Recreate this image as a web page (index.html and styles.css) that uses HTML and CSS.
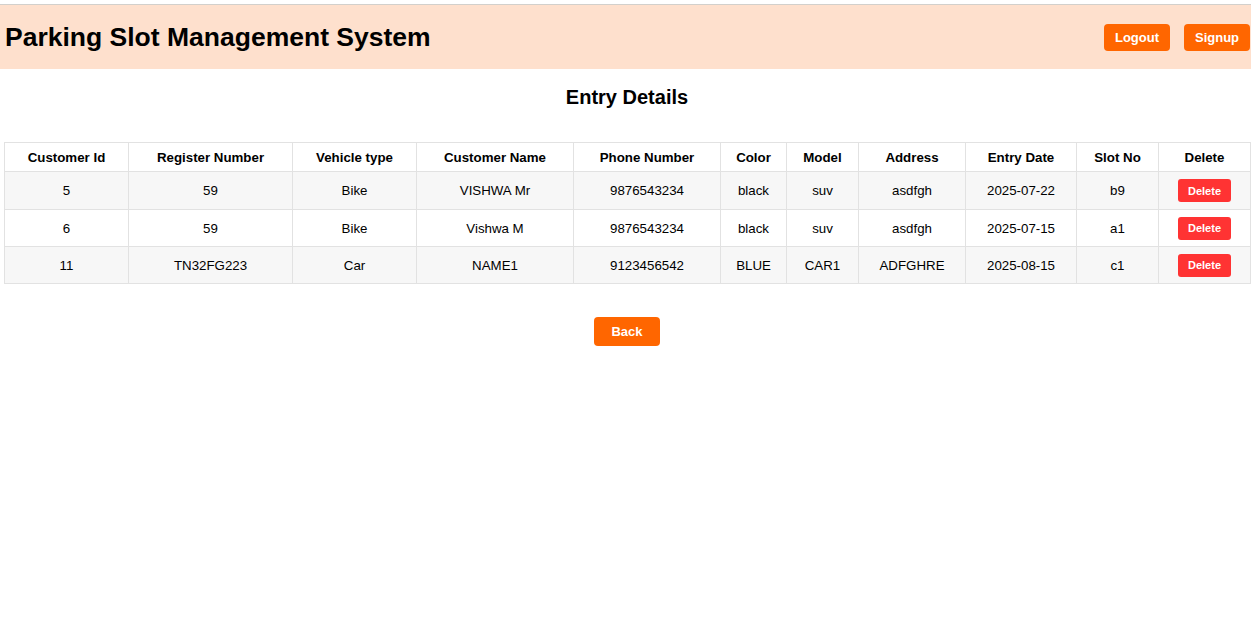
FILE: index.html
```html
<!DOCTYPE html>
<html>
<head>
<meta charset="utf-8">
<title>Entry Details</title>
<link rel="stylesheet" href="styles.css">
</head>
<body>
<header class="topbar">
  <h1 class="brand">Parking Slot Management System</h1>
  <nav class="actions">
    <button class="btn btn-orange">Logout</button>
    <button class="btn btn-orange">Signup</button>
  </nav>
</header>
<main class="content">
  <h2 class="page-title">Entry Details</h2>
  <table class="entries">
    <colgroup>
      <col class="c1"><col class="c2"><col class="c3"><col class="c4"><col class="c5"><col class="c6"><col class="c7"><col class="c8"><col class="c9"><col class="c10"><col class="c11">
    </colgroup>
    <thead>
      <tr><th>Customer Id</th><th>Register Number</th><th>Vehicle type</th><th>Customer Name</th><th>Phone Number</th><th>Color</th><th>Model</th><th>Address</th><th>Entry Date</th><th>Slot No</th><th>Delete</th></tr>
    </thead>
    <tbody>
      <tr><td>5</td><td>59</td><td>Bike</td><td>VISHWA Mr</td><td>9876543234</td><td>black</td><td>suv</td><td>asdfgh</td><td>2025-07-22</td><td>b9</td><td><button class="btn-del">Delete</button></td></tr>
      <tr><td>6</td><td>59</td><td>Bike</td><td>Vishwa M</td><td>9876543234</td><td>black</td><td>suv</td><td>asdfgh</td><td>2025-07-15</td><td>a1</td><td><button class="btn-del">Delete</button></td></tr>
      <tr><td>11</td><td>TN32FG223</td><td>Car</td><td>NAME1</td><td>9123456542</td><td>BLUE</td><td>CAR1</td><td>ADFGHRE</td><td>2025-08-15</td><td>c1</td><td><button class="btn-del">Delete</button></td></tr>
    </tbody>
  </table>
  <div class="back-wrap">
    <button class="btn btn-orange btn-back">Back</button>
  </div>
</main>
</body>
</html>
```

FILE: styles.css
```css
html, body {
  margin: 0;
  padding: 0;
  background: #ffffff;
  font-family: "Liberation Sans", Arial, sans-serif;
  color: #000;
}
body {
  padding-top: 4px;
}
.topbar {
  border-top: 1px solid #d2d0cc;
  background: #fee0cd;
  height: 64px;
  display: flex;
  align-items: center;
  justify-content: space-between;
  padding: 0 1px 0 5px;
}
.brand {
  margin: 0;
  font-size: 26.5px;
  font-weight: bold;
}
.actions {
  display: flex;
  gap: 14px;
  padding-top: 1px;
}
.btn {
  font-family: "Liberation Sans", Arial, sans-serif;
  border: none;
  cursor: pointer;
}
.btn-orange {
  background: #ff6600;
  color: #fff;
  font-weight: bold;
  font-size: 13px;
  width: 66px;
  height: 27px;
  border-radius: 4px;
  padding: 0;
}
.content {
  padding: 0 1px 0 4px;
}
.page-title {
  text-align: center;
  font-size: 20px;
  font-weight: bold;
  margin: 16px 0 33px;
  line-height: 24px;
}
.entries {
  width: 1246px;
  border-collapse: collapse;
  table-layout: fixed;
  font-size: 13.3px;
}
.c1 { width: 124px; }
.c2 { width: 164px; }
.c3 { width: 124px; }
.c4 { width: 157px; }
.c5 { width: 147px; }
.c6 { width: 66px; }
.c7 { width: 72px; }
.c8 { width: 107px; }
.c9 { width: 111px; }
.c10 { width: 82px; }
.c11 { width: 92px; }
.entries th, .entries td {
  border: 1px solid #e2e2e2;
  text-align: center;
  padding: 0 4px;
}
.entries th {
  height: 28px;
  font-weight: bold;
  background: #fff;
}
.entries td {
  height: 36px;
}
.entries tbody tr:first-child td {
  height: 37px;
}
.entries tbody tr:nth-child(odd) td {
  background: #f7f7f7;
}
.entries tbody tr:nth-child(even) td {
  background: #ffffff;
}
.btn-del {
  background: #ff3333;
  color: #fff;
  border: none;
  border-radius: 3px;
  font-family: "Liberation Sans", Arial, sans-serif;
  font-weight: bold;
  font-size: 11px;
  width: 53px;
  height: 23px;
  padding: 0;
}
.back-wrap {
  display: flex;
  justify-content: center;
  margin-top: 33px;
}
.btn-back {
  height: 29px;
}
```
